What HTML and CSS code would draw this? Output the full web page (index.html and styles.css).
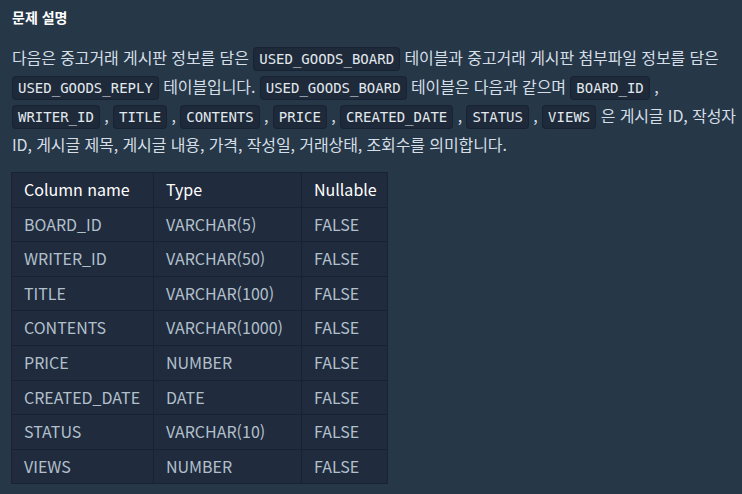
FILE: index.html
```html
<!DOCTYPE html>
<html lang="ko">
<head>
<meta charset="utf-8">
<link rel="stylesheet" href="styles.css">
</head>
<body>
<div class="guide">
  <h6 class="title">문제 설명</h6>
  <p class="desc">다음은 중고거래 게시판 정보를 담은 <code>USED_GOODS_BOARD</code> 테이블과 중고거래 게시판 첨부파일 정보를 담은 <code>USED_GOODS_REPLY</code> 테이블입니다. <code>USED_GOODS_BOARD</code> 테이블은 다음과 같으며 <code>BOARD_ID</code> , <code>WRITER_ID</code> , <code>TITLE</code> , <code>CONTENTS</code> , <code>PRICE</code> , <code>CREATED_DATE</code> , <code>STATUS</code> , <code>VIEWS</code> 은 게시글 ID, 작성자 ID, 게시글 제목, 게시글 내용, 가격, 작성일, 거래상태, 조회수를 의미합니다.</p>
  <table class="schema">
    <colgroup>
      <col class="c-name">
      <col class="c-type">
      <col class="c-null">
    </colgroup>
    <thead>
      <tr><th>Column name</th><th>Type</th><th>Nullable</th></tr>
    </thead>
    <tbody>
      <tr><td>BOARD_ID</td><td>VARCHAR(5)</td><td>FALSE</td></tr>
      <tr><td>WRITER_ID</td><td>VARCHAR(50)</td><td>FALSE</td></tr>
      <tr><td>TITLE</td><td>VARCHAR(100)</td><td>FALSE</td></tr>
      <tr><td>CONTENTS</td><td>VARCHAR(1000)</td><td>FALSE</td></tr>
      <tr><td>PRICE</td><td>NUMBER</td><td>FALSE</td></tr>
      <tr><td>CREATED_DATE</td><td>DATE</td><td>FALSE</td></tr>
      <tr><td>STATUS</td><td>VARCHAR(10)</td><td>FALSE</td></tr>
      <tr><td>VIEWS</td><td>NUMBER</td><td>FALSE</td></tr>
    </tbody>
  </table>
</div>
</body>
</html>
```
FILE: styles.css
```css
html, body {
  margin: 0;
  padding: 0;
  background: #263747;
}
.guide {
  padding: 7px 6px 0 12px;
  font-family: "Noto Sans CJK KR", "Noto Sans", sans-serif;
  color: #d5dee6;
}
.title {
  margin: 0 0 16px 0;
  font-size: 14px;
  font-weight: 700;
  line-height: 20px;
  color: #ffffff;
}
.desc {
  margin: 0 0 13px 0;
  font-size: 16px;
  line-height: 29px;
  letter-spacing: -0.1px;
  color: #d5dee6;
}
.desc code {
  font-family: "DejaVu Sans Mono", monospace;
  font-size: 14px;
  line-height: 1;
  letter-spacing: 0;
  background: #1e2a39;
  border: 1px solid #172334;
  border-radius: 4px;
  padding: 3px 5px;
  color: #e1e8ee;
}
.schema {
  border-collapse: collapse;
  background: #202b3d;
  margin-left: -1px;
  font-size: 16px;
  table-layout: fixed;
  width: 376px;
}
.c-name { width: 142px; }
.c-type { width: 148px; }
.c-null { width: 86px; }
.schema th, .schema td {
  border: 1px solid #172334;
  padding: 6px 12px;
  line-height: 21.6px;
  text-align: left;
  font-weight: 400;
  white-space: nowrap;
}
.schema th {
  color: #ffffff;
}
.schema td {
  color: #b2c0cc;
}
```
